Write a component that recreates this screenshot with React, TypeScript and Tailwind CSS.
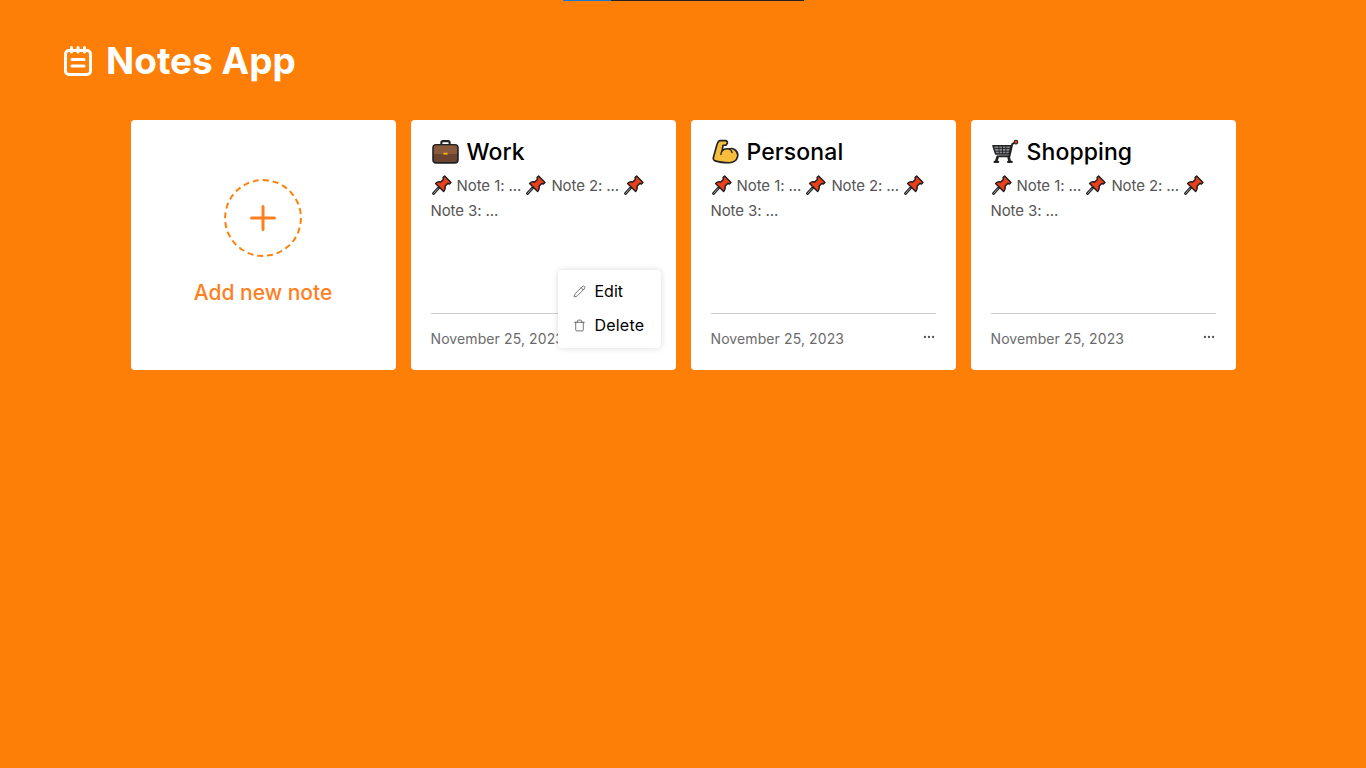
import React from 'react';
import { Ellipsis, Pencil, Trash } from 'lucide-react';

const PinEmoji = () => (
  <svg viewBox="0 0 20 20" className="mx-[1px] inline-block h-[20px] w-[20px] align-[-4px]">
    <path d="M1.5 18.5 L6.5 13" stroke="#222" strokeWidth="2.8" strokeLinecap="round" />
    <path d="M1.8 18.2 L6 13.6" stroke="#a5abb0" strokeWidth="1" strokeLinecap="round" />
    <path
      d="M12.6 1 L19 7.4 L17.4 9 L15.8 8.5 L13 11.3 C13.6 13.4 13 15 11.6 16.4 L3.6 8.4 C5 7 6.6 6.4 8.7 7 L11.5 4.2 L11 2.6 Z"
      fill="#e8401c"
      stroke="#1c1c1c"
      strokeWidth="1.4"
      strokeLinejoin="round"
    />
  </svg>
);

const BriefcaseEmoji = () => (
  <svg viewBox="0 0 26 24" className="ml-[1px] h-[25px] w-[27px]">
    <path d="M9 6 V3.5 C9 2.6 9.6 2 10.5 2 H15.5 C16.4 2 17 2.6 17 3.5 V6" fill="none" stroke="#222" strokeWidth="2" />
    <rect x="1" y="5.5" width="24" height="17.5" rx="3" fill="#6b4430" stroke="#222" strokeWidth="1.6" />
    <path d="M1.8 8.5 C1.8 7 2.6 6.3 4 6.3 H22 C23.4 6.3 24.2 7 24.2 8.5 V13 C24.2 14 23.6 14.5 22.6 14.5 H3.4 C2.4 14.5 1.8 14 1.8 13 Z" fill="#8a5a3c" />
    <rect x="11" y="13.2" width="4" height="1.8" fill="#f5b400" />
  </svg>
);

const ArmEmoji = () => (
  <svg viewBox="0 0 26 24" className="ml-[1px] h-[25px] w-[27px]">
    <path
      d="M8 1.5 H13 C14.5 1.5 15.3 3 14.6 4.3 L13.3 6 H10.6 L9.8 11.2 C11.5 9.6 14 9 16.6 9.6 C18 9 20 9 21.6 10 C24.2 11.6 25.2 14.4 24.6 17 C23.8 20.6 20.4 22.8 16.6 22.8 C11.6 22.8 6.6 22.2 3 21 C1.6 20.5 1 19.4 1.3 18 L4.6 6 C5.2 3.8 6.2 1.5 8 1.5 Z"
      fill="#f7bd3c"
      stroke="#222"
      strokeWidth="1.6"
      strokeLinejoin="round"
    />
    <path d="M9.8 11.2 C9 12.4 8.6 13.6 8.6 15 M16.6 9.6 C18 10.4 19 11.6 19.4 13" fill="none" stroke="#222" strokeWidth="1.3" strokeLinecap="round" />
  </svg>
);

const CartEmoji = () => (
  <svg viewBox="0 0 26 24" className="ml-[1px] h-[25px] w-[27px]">
    <circle cx="23" cy="3" r="1.8" fill="#e8401c" stroke="#222" strokeWidth="1" />
    <path d="M21.8 3.6 L19.6 4.6 L16.8 16.6 H6.2" fill="none" stroke="#222" strokeWidth="1.8" strokeLinejoin="round" />
    <path d="M1 6.5 H18.4 L16.6 14.4 H3.6 Z" fill="#8b8f94" stroke="#222" strokeWidth="1.6" strokeLinejoin="round" />
    <path d="M3 9 H17.6 M3.6 11.7 H17 M6.5 6.5 L7 14.4 M10 6.5 L10.2 14.4 M13.5 6.5 L13.3 14.4" stroke="#222" strokeWidth="0.9" />
    <path d="M5.5 17 L4 21.5 M16 17 L17 21.5" stroke="#222" strokeWidth="2.6" strokeLinecap="round" />
    <path d="M2.5 22 H6 M15.5 22 H19" stroke="#222" strokeWidth="2" strokeLinecap="round" />
  </svg>
);

const NOTES = [
  { id: 'work', title: 'Work', icon: <BriefcaseEmoji />, menu: true },
  { id: 'personal', title: 'Personal', icon: <ArmEmoji />, menu: false },
  { id: 'shopping', title: 'Shopping', icon: <CartEmoji />, menu: false },
];

const NoteCard = ({ title, icon, menu }: { title: string; icon: React.ReactNode; menu: boolean }) => (
  <div className="relative flex h-[250px] w-[265px] flex-col rounded-[4px] bg-white px-[20px] pt-[18px]">
    <div className="flex h-[26px] items-center gap-[8px]">
      {icon}
      <h2 className="pt-[2px] text-[23px] leading-[26px] font-medium tracking-[0.1px] text-black">{title}</h2>
    </div>
    <p className="mt-[9px] h-[140px] text-[15px] leading-[25px] tracking-[-0.1px] text-[#555]">
      <PinEmoji /> Note 1: ... <PinEmoji /> Note 2: ... <PinEmoji /> Note 3: ...
    </p>
    <div className="flex justify-between border-t border-[#ccc] pt-[15px]">
      <span className="text-[14px] leading-[20px] tracking-[0.1px] text-[#6b6b6b]">November 25, 2023</span>
      <Ellipsis size={14} strokeWidth={2} className="mt-[1px] text-[#555]" />
    </div>
    {menu && (
      <div className="absolute top-[150px] left-[147px] flex h-[78px] w-[103px] flex-col justify-center gap-[14px] rounded-[4px] bg-white pb-[2px] pl-[15px] shadow-[0_0_6px_rgba(0,0,0,0.15)]">
        <div className="flex items-center gap-[9px] text-[16px] leading-[20px] text-black">
          <Pencil size={13} strokeWidth={1.5} className="text-[#555]" />
          Edit
        </div>
        <div className="flex items-center gap-[9px] text-[16px] leading-[20px] tracking-[0.2px] text-black">
          <Trash size={13} strokeWidth={1.5} className="text-[#555]" />
          Delete
        </div>
      </div>
    )}
  </div>
);

const App: React.FC = () => {
  return (
    <div className="min-h-[768px] bg-[#fe7f07] font-['Inter',sans-serif]">
      {/* thin bar along the top edge */}
      <div className="flex justify-center">
        <div className="flex h-px w-[241px] bg-[#222]">
          <div className="w-[48px] bg-[#1877d2]" />
        </div>
      </div>

      <header className="flex items-center gap-[12px] pt-[40px] pl-[62px]">
        <svg viewBox="0 0 32 32" className="mt-[-1px] h-[32px] w-[32px]" fill="none" stroke="white" strokeWidth="3" strokeLinecap="round">
          <rect x="3.5" y="5.5" width="25" height="24" rx="3.5" />
          <path d="M9.5 2.5 V7 M16 2.5 V7 M22.5 2.5 V7" />
          <path d="M10 14.5 H22 M10 21 H22" />
        </svg>
        <h1 className="text-[37px] leading-[40px] font-bold text-white">Notes App</h1>
      </header>

      <main className="mx-auto mt-[39px] flex w-[1105px] gap-[15px]">
        <div className="flex h-[250px] w-[265px] flex-col items-center rounded-[4px] bg-white pt-[59px]">
          <div className="flex h-[78px] w-[78px] items-center justify-center rounded-full border-2 border-dashed border-[#fe7f07]">
            <svg viewBox="0 0 26 26" className="h-[26px] w-[26px]" stroke="#fe7f1f" strokeWidth="3" strokeLinecap="round">
              <path d="M1.5 13 H24.5 M13 1.5 V24.5" />
            </svg>
          </div>
          <div className="mt-[21px] text-[21px] leading-[30px] font-medium text-[#ff7f1f]">Add new note</div>
        </div>
        {NOTES.map((note) => (
          <NoteCard key={note.id} title={note.title} icon={note.icon} menu={note.menu} />
        ))}
      </main>
    </div>
  );
};

export default App;
